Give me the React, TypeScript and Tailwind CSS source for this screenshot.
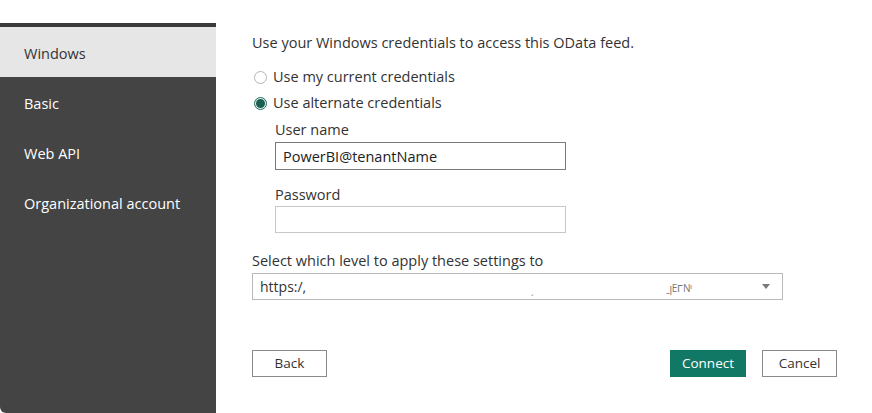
import React, { useState } from 'react';

const font = { fontFamily: '"Open Sans", "Noto Sans", sans-serif' };

function Radio({ checked }: { checked: boolean }) {
  return (
    <span
      className={`w-[13px] h-[13px] rounded-full border flex items-center justify-center shrink-0 ${
        checked ? 'border-[#1f6e5e] bg-[#dff0ec]' : 'border-[#b5b5b5] bg-white'
      }`}
    >
      {checked && <span className="w-[9px] h-[9px] rounded-full bg-[#1b5e52]" />}
    </span>
  );
}

export default function App() {
  const [tab, setTab] = useState('Windows');
  const [alt, setAlt] = useState(true);
  const tabs = ['Windows', 'Basic', 'Web API', 'Organizational account'];

  return (
    <div className="w-[872px] h-[413px] bg-white flex overflow-hidden" style={font}>
      <div className="w-[216px] pt-[23px] shrink-0 flex flex-col">
        <div className="flex-1 bg-[#444444] border-t-4 border-[#3a3a3a] rounded-bl-[6px]">
          {tabs.map(t => (
            <div
              key={t}
              onClick={() => setTab(t)}
              className={`h-[50px] pl-6 pt-[3px] flex items-center text-[14.5px] cursor-pointer ${
                tab === t ? 'bg-[#e6e6e6] text-[#333333]' : 'text-white'
              }`}
            >
              {t}
            </div>
          ))}
        </div>
      </div>

      <div className="flex-1 pl-[36px] pt-[33px] pr-[35px] text-[#333333] text-[14.5px] flex flex-col">
        <p className="leading-5">Use your Windows credentials to access this OData feed.</p>

        <div className="mt-[11px] flex flex-col pl-[2px]">
          <label className="flex items-center gap-[6px] h-[26px] cursor-pointer" onClick={() => setAlt(false)}>
            <Radio checked={!alt} />
            <span>Use my current credentials</span>
          </label>
          <label className="flex items-center gap-[6px] h-[26px] cursor-pointer" onClick={() => setAlt(true)}>
            <Radio checked={alt} />
            <span>Use alternate credentials</span>
          </label>
        </div>

        <div className="pl-[23px] flex flex-col">
          <span className="leading-5 mt-[4px]">User name</span>
          <input
            defaultValue="PowerBI@tenantName"
            className="mt-[2px] w-[291px] h-[28px] border border-[#7a7a7a] px-[7px] text-[14.5px] text-[#222] outline-none"
            style={font}
          />
          <span className="leading-5 mt-[15px]">Password</span>
          <input
            type="password"
            className="mt-[1px] w-[291px] h-[27px] border border-[#c8c8c8] px-[7px] outline-none"
          />
        </div>

        <span className="leading-5 mt-[18px]">Select which level to apply these settings to</span>
        <div className="mt-[2px] w-[531px] h-[27px] border border-[#b9b9b9] flex items-center pl-[7px] pr-[12px] relative">
          <span className="text-[14px]">https:/,</span>
          <span className="ml-auto w-0 h-0 border-l-[4px] border-r-[4px] border-t-[5px] border-l-transparent border-r-transparent border-t-[#7a7a7a]" />
          <span className="absolute left-[278px] top-[10px] text-[9px] text-[#777]">ˏ</span>
          <span className="absolute left-[413px] top-[7px] text-[10px] text-[#777] tracking-tight">ˍꞁEᒥNᑊ</span>
        </div>

        <div className="mt-[50px] flex items-center">
          <button className="w-[75px] h-[27px] border border-[#8a8a8a] bg-white text-[13.5px] text-[#333]">Back</button>
          <button className="ml-auto w-[76px] h-[27px] bg-[#117865] text-white text-[13.5px]">Connect</button>
          <button className="ml-[16px] w-[75px] h-[27px] border border-[#8a8a8a] bg-white text-[13.5px] text-[#333]">Cancel</button>
        </div>
      </div>
    </div>
  );
}
